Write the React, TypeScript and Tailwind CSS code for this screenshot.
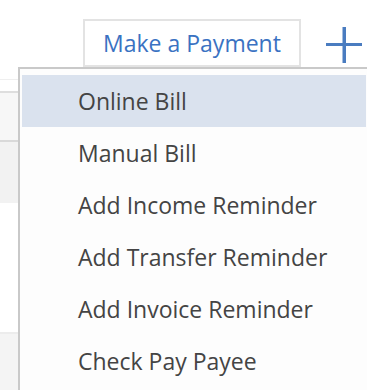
import React from 'react';

const items = [
  'Online Bill',
  'Manual Bill',
  'Add Income Reminder',
  'Add Transfer Reminder',
  'Add Invoice Reminder',
  'Check Pay Payee',
];

const PlusIcon: React.FC = () => (
  <svg width="36" height="36" viewBox="0 0 36 36" className="block">
    <rect x="0" y="16" width="36" height="3" fill="#4a7cc0" />
    <rect x="16.5" y="0" width="3.5" height="36" fill="#4a7cc0" />
  </svg>
);

const App: React.FC = () => {
  return (
    <div
      className="relative w-[367px] h-[390px] overflow-hidden bg-white"
      style={{ fontFamily: '"Open Sans", "Noto Sans", "Liberation Sans", sans-serif' }}
    >
      {/* header row */}
      <div className="flex items-start pt-[19px] pl-[83px] h-[67px]">
        <button className="w-[218px] h-[48px] border-2 border-[#e3e3e3] bg-white text-[#3a72c2] text-[23px] leading-none flex items-center justify-center">
          Make a Payment
        </button>
        <div className="ml-[25px] mt-[8px]">
          <PlusIcon />
        </div>
      </div>

      {/* page content behind the menu */}
      <div className="flex flex-col">
        <div className="h-[12px]"></div>
        <div className="h-[12px] border-t border-[#efefef]"></div>
        <div className="h-[49px] border-t-2 border-[#dedede] bg-[#f7f7f7]"></div>
        <div className="h-[63px] border-t-2 border-[#d9d9d9] bg-[#f2f2f2]"></div>
        <div className="h-[129px] bg-white"></div>
        <div className="h-[58px] border-t-2 border-[#ececec] bg-[#f4f4f4]"></div>
      </div>

      {/* dropdown menu */}
      <div className="absolute left-[18px] top-[67px] w-[352px] h-[340px] border-2 border-[#c9c9c9] bg-[#fdfdfd] pt-[6px] pl-[2px] pr-[2px]">
        {items.map((item, i) => (
          <div
            key={item}
            className={`h-[52px] flex items-center pl-[56px] text-[23px] text-[#444444] ${i === 0 ? 'bg-[#dae2ee]' : ''}`}
          >
            {item}
          </div>
        ))}
      </div>
    </div>
  );
};

export default App;
